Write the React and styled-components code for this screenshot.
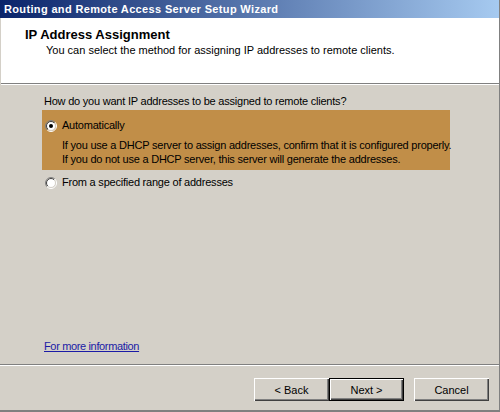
import React from "react";
import styled, { createGlobalStyle } from "styled-components";

const Global = createGlobalStyle`
  html, body { margin: 0; padding: 0; background: #d4d0c8; }
  * { box-sizing: border-box; }
`;

const Window = styled.div`
  width: 500px;
  height: 412px;
  display: flex;
  flex-direction: column;
  background: #d4d0c8;
  border-right: 1px solid #808080;
  border-bottom: 2px solid #808080;
  font-family: "Liberation Sans", Arial, sans-serif;
  font-size: 11px;
  color: #000;
  overflow: hidden;
`;

const TitleBar = styled.div`
  height: 18px;
  flex: none;
  display: flex;
  align-items: center;
  padding-left: 4px;
  background: linear-gradient(to right, #0a246a, #a6caf0);
  color: #fff;
  font-weight: bold;
  font-size: 11px;
  letter-spacing: 0.35px;
  white-space: nowrap;
`;

const Header = styled.div`
  flex: none;
  height: 66px;
  background: #fff;
  padding: 9px 0 0 24px;
  border-bottom: 1px solid #808080;
  box-shadow: 0 1px 0 #fff;
  margin-left: 1px;
`;

const HeaderTitle = styled.div`
  font-weight: bold;
  font-size: 13px;
  line-height: 15px;
`;

const HeaderSub = styled.div`
  margin-top: 2px;
  padding-left: 21px;
  line-height: 13px;
`;

const Body = styled.div`
  flex: 1;
  display: flex;
  flex-direction: column;
  padding: 10px 0 11px 42px;
  margin-top: 1px;
  letter-spacing: -0.22px;
  white-space: nowrap;
`;

const Question = styled.div`
  padding-left: 2px;
  line-height: 13px;
`;

const Option = styled.div`
  width: 408px;
  margin-top: ${(p) => p.$gap}px;
  padding: ${(p) => (p.$selected ? "9px 0 4px" : "0")};
  background: ${(p) => (p.$selected ? "#c18e48" : "transparent")};
`;

const OptionRow = styled.label`
  display: flex;
  align-items: center;
  height: 13px;
  padding-left: 3px;
  gap: 5px;
  line-height: 13px;
`;

const Desc = styled.div`
  margin-top: 6px;
  padding-left: 20px;
  line-height: 14px;
`;

const Link = styled.a`
  align-self: flex-start;
  margin-top: auto;
  margin-left: 2px;
  line-height: 13px;
  letter-spacing: -0.35px;
  color: #1a1aa6;
  text-decoration: underline;
  cursor: pointer;
`;

const Footer = styled.div`
  flex: none;
  height: 46px;
  border-top: 1px solid #808080;
  box-shadow: inset 0 1px 0 #fff;
  display: flex;
  justify-content: flex-end;
  align-items: flex-start;
  padding: 13px 10px 0 0;
`;

const ButtonGroup = styled.div`
  display: flex;
  margin-right: ${(p) => p.$gap || 0}px;
`;

const Button = styled.button`
  width: 75px;
  height: 23px;
  padding: 0;
  font-family: "Liberation Sans", Arial, sans-serif;
  font-size: 11px;
  color: #000;
  background: #d4d0c8;
  border: ${(p) => (p.$default ? "1px solid #000" : "none")};
  box-shadow: inset 1px 1px 0 #fff, inset -1px -1px 0 #404040, inset -2px -2px 0 #808080;
`;

const Radio = ({ checked }) => (
  <svg width="12" height="12" viewBox="0 0 12 12" style={{ flex: "none" }}>
    <defs>
      <linearGradient id="ro" x1="0" y1="0" x2="1" y2="1">
        <stop offset="0.5" stopColor="#808080" />
        <stop offset="0.5" stopColor="#ffffff" />
      </linearGradient>
      <linearGradient id="ri" x1="0" y1="0" x2="1" y2="1">
        <stop offset="0.5" stopColor="#404040" />
        <stop offset="0.5" stopColor="#d4d0c8" />
      </linearGradient>
    </defs>
    <circle cx="6" cy="6" r="5.5" fill="none" stroke="url(#ro)" strokeWidth="1" />
    <circle cx="6" cy="6" r="4.5" fill="#fff" stroke="url(#ri)" strokeWidth="1" />
    {checked && <circle cx="6" cy="6" r="2" fill="#000" />}
  </svg>
);

export default function App() {
  return (
    <>
      <Global />
      <Window>
        <TitleBar>Routing and Remote Access Server Setup Wizard</TitleBar>
        <Header>
          <HeaderTitle>IP Address Assignment</HeaderTitle>
          <HeaderSub>You can select the method for assigning IP addresses to remote clients.</HeaderSub>
        </Header>
        <Body>
          <Question>How do you want IP addresses to be assigned to remote clients?</Question>
          <Option $selected $gap={2}>
            <OptionRow>
              <Radio checked />
              <span>Automatically</span>
            </OptionRow>
            <Desc>
              If you use a DHCP server to assign addresses, confirm that it is configured properly.
              <br />
              If you do not use a DHCP server, this server will generate the addresses.
            </Desc>
          </Option>
          <Option $gap={6}>
            <OptionRow>
              <Radio />
              <span>From a specified range of addresses</span>
            </OptionRow>
          </Option>
          <Link>For more information</Link>
        </Body>
        <Footer>
          <ButtonGroup $gap={10}>
            <Button>&lt; Back</Button>
            <Button $default>Next &gt;</Button>
          </ButtonGroup>
          <ButtonGroup>
            <Button>Cancel</Button>
          </ButtonGroup>
        </Footer>
      </Window>
    </>
  );
}
